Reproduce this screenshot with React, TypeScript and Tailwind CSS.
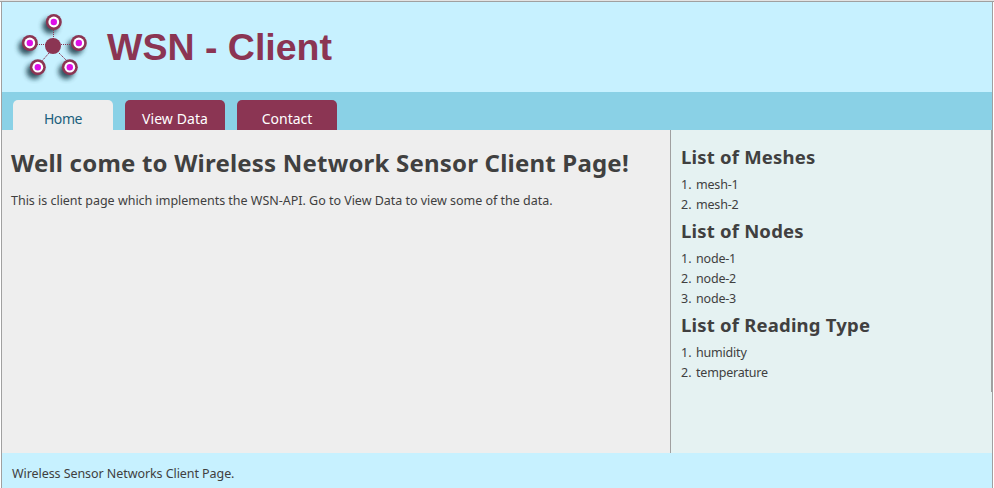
import React from "react";

const SANS = "font-['Noto_Sans','DejaVu_Sans',sans-serif]";

const satellites = [
  { x: 53.8, y: 22 },
  { x: 29.8, y: 43 },
  { x: 78.8, y: 43 },
  { x: 37.8, y: 67.2 },
  { x: 69.8, y: 67.2 },
];

function Logo() {
  return (
    <svg width="100" height="90" viewBox="2 2 100 90" className="block shrink-0">
      <defs>
        <filter id="soft" x="-60%" y="-60%" width="220%" height="220%">
          <feGaussianBlur stdDeviation="2.4" />
        </filter>
      </defs>
      {satellites.map((s) => (
        <circle key={`s${s.x}-${s.y}`} cx={s.x - 3.5} cy={s.y + 4} r="7.8" fill="#123845" opacity="0.85" filter="url(#soft)" />
      ))}
      <g stroke="#8b3553" strokeWidth="1" fill="none">
        <path d="M53.5 30V39M37 44.5H46M61 44.5H71" strokeDasharray="1 1" />
        <path d="M49 53L42 61M59 53L66 60" strokeDasharray="1.5 .7" />
      </g>
      <circle cx="53" cy="46" r="8" fill="#8b3553" />
      {satellites.map((s) => (
        <g key={`${s.x}-${s.y}`}>
          <circle cx={s.x} cy={s.y} r="8" fill="#8b3553" />
          <circle cx={s.x} cy={s.y} r="5.4" fill="#fff" />
          <circle cx={s.x} cy={s.y} r="3.2" fill="#dd10e8" />
        </g>
      ))}
    </svg>
  );
}

function Tab({ label, active = false, spacing }: { label: string; active?: boolean; spacing: string }) {
  return (
    <a
      className={`flex h-[30px] w-[100px] justify-center whitespace-nowrap rounded-t-[5px] pt-[7px] text-[14px] leading-[24px] ${spacing} ${
        active ? "bg-[#eee] text-[#1b5f7d]" : "bg-[#8b3553] text-white"
      }`}
    >
      {label}
    </a>
  );
}

function List({ title, items }: { title: string; items: string[] }) {
  return (
    <section>
      <h2 className="h-[34px] whitespace-nowrap pt-[4px] text-[18.5px] font-bold leading-[24px] tracking-[0.2px]">{title}</h2>
      <ol>
        {items.map((item, i) => (
          <li key={item} className="flex h-5 text-[12.5px] leading-5 tracking-[-0.2px]">
            <span className="w-[15px] tracking-[0.2px]">{i + 1}.</span>
            <span>{item}</span>
          </li>
        ))}
      </ol>
    </section>
  );
}

export default function App() {
  return (
    <div className={`h-[488px] w-[994px] overflow-hidden bg-white text-[#404040] ${SANS}`}>
      <div className="h-[2px] border-b border-[#a0a0a0] bg-[#e3e3e3]" />
      <div className="mx-px h-[486px] border-x border-[#a0a0a0]">
        <header className="flex h-[90px] bg-[#c7f1ff]">
          <Logo />
          <h1 className="ml-[5px] mt-[22px] whitespace-nowrap font-['Liberation_Sans',Arial,sans-serif] text-[37.5px] font-bold leading-[46px] text-[#8b3553]">
            WSN - Client
          </h1>
        </header>
        <nav className="flex h-[38px] items-end gap-3 bg-[#8ad1e6] pl-[11px]">
          <Tab label="Home" active spacing="tracking-[-0.4px]" />
          <Tab label="View Data" spacing="tracking-[0.1px]" />
          <Tab label="Contact" spacing="tracking-[0px]" />
        </nav>
        <div className="flex h-[323px]">
          <main className="w-[668px] bg-[#eee] pl-[9px]">
            <h1 className="whitespace-nowrap pt-[18px] text-[24px] font-bold leading-[30px] tracking-[0.2px]">
              Well come to Wireless Network Sensor Client Page!
            </h1>
            <p className="mt-[13px] whitespace-nowrap text-[12.5px] leading-[20px] tracking-[-0.02px]">
              This is client page which implements the WSN-API. Go to View Data to view some of the data.
            </p>
          </main>
          <aside className="flex-1 border-l border-[#a0a0a0] bg-[#e5f2f2]">
            <div className="h-[262px] border-r border-[#a0a0a0] pl-[10px] pt-[11px]">
              <List title="List of Meshes" items={["mesh-1", "mesh-2"]} />
              <List title="List of Nodes" items={["node-1", "node-2", "node-3"]} />
              <List title="List of Reading Type" items={["humidity", "temperature"]} />
            </div>
          </aside>
        </div>
        <footer className="h-[35px] bg-[#c7f1ff] pl-[10px] pt-[11px] text-[12.5px] leading-[20px] tracking-[-0.07px]">
          Wireless Sensor Networks Client Page.
        </footer>
      </div>
    </div>
  );
}
